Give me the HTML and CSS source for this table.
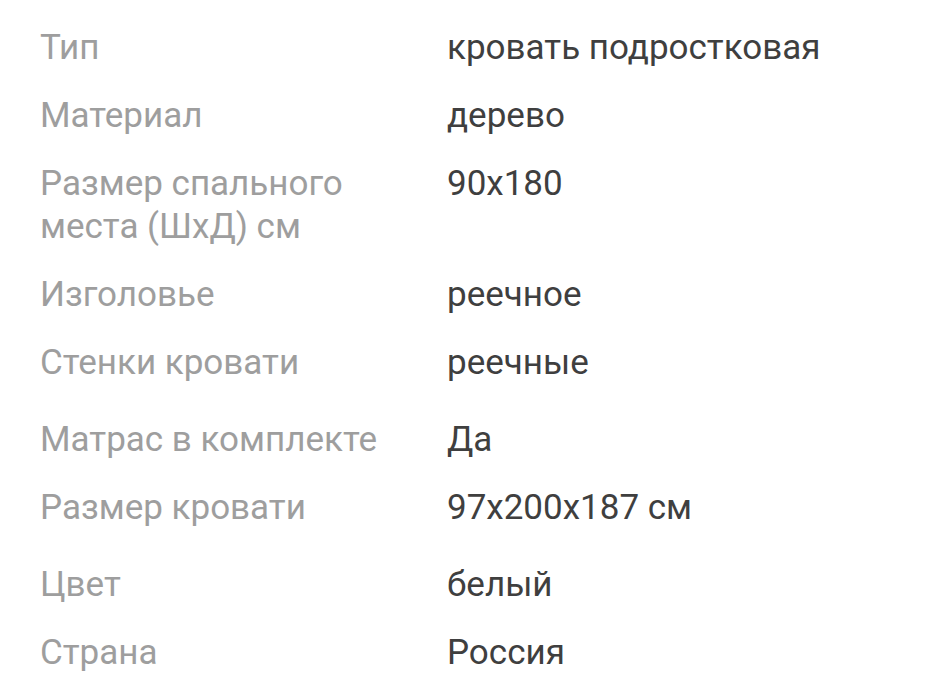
FILE: index.html
```html
<!DOCTYPE html>
<html lang="ru">
<head>
<meta charset="utf-8">
<link rel="stylesheet" href="styles.css">
</head>
<body>
<dl class="specs">
  <div class="row"><dt>Тип</dt><dd>кровать подростковая</dd></div>
  <div class="row"><dt>Материал</dt><dd>дерево</dd></div>
  <div class="row"><dt>Размер спального места (ШхД) см</dt><dd>90x180</dd></div>
  <div class="row"><dt>Изголовье</dt><dd>реечное</dd></div>
  <div class="row"><dt>Стенки кровати</dt><dd>реечные</dd></div>
  <div class="row row-gap"><dt>Матрас в комплекте</dt><dd>Да</dd></div>
  <div class="row"><dt>Размер кровати</dt><dd>97x200x187 см</dd></div>
  <div class="row row-gap"><dt>Цвет</dt><dd>белый</dd></div>
  <div class="row"><dt>Страна</dt><dd>Россия</dd></div>
</dl>
</body>
</html>
```
FILE: styles.css
```css
html, body {
  margin: 0;
  padding: 0;
  background: #ffffff;
}
body {
  font-family: Roboto, "Noto Sans", sans-serif;
  font-size: 35px;
  line-height: 43px;
}
.specs {
  margin: 0;
  padding: 26px 0 0 40px;
  display: flex;
  flex-direction: column;
  gap: 25px;
}
.row {
  display: grid;
  grid-template-columns: 407px 1fr;
}
.row-gap {
  margin-top: 9px;
}
dt {
  color: #9e9e9e;
  margin: 0;
  padding-right: 30px;
}
dd {
  color: #3f3f3f;
  margin: 0;
}
```
